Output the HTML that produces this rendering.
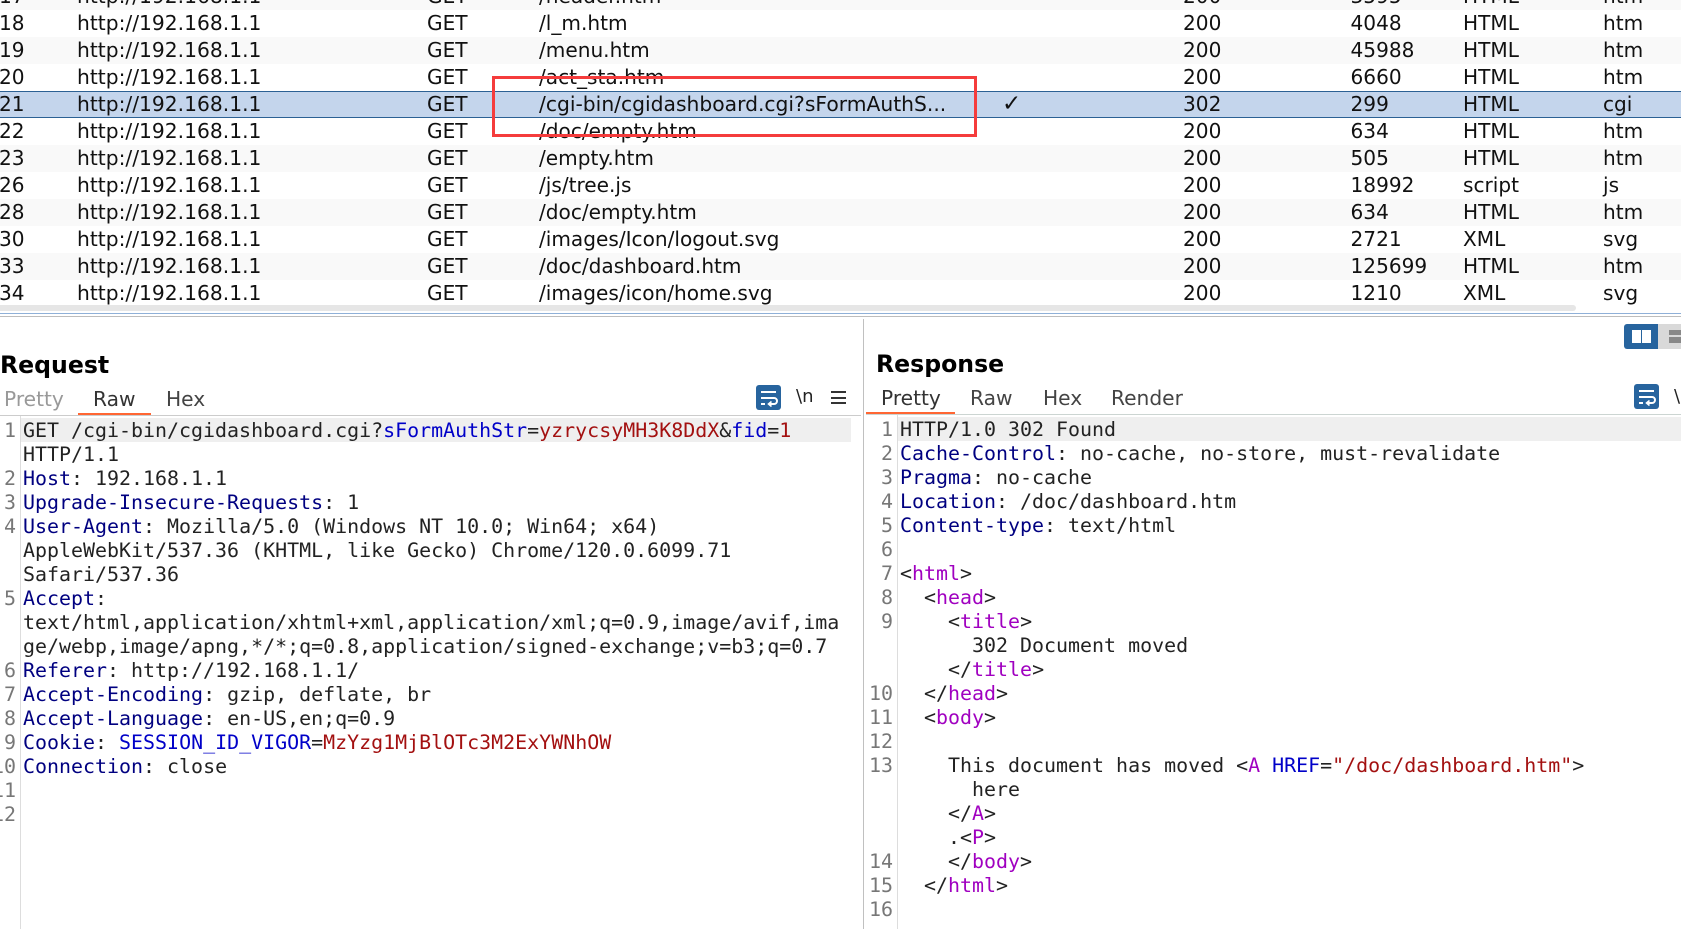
<!DOCTYPE html>
<html lang="en">
<head>
<meta charset="utf-8">
<title>Burp Suite Proxy History</title>
<style>
html,body{margin:0;padding:0;background:#fff;}
body{position:relative;width:1681px;height:929px;overflow:hidden;font-family:"DejaVu Sans","Liberation Sans",sans-serif;color:#000;}
.r{position:absolute;left:0;width:1681px;height:27px;line-height:27px;font-size:20.1px;color:#111;white-space:nowrap;}
.g{background:#f9f9f9;}
.s{background:#c4d5ec;border-top:1px solid #2c6194;border-bottom:1px solid #2c6194;line-height:25px;box-sizing:border-box;height:27px;}
.s .d{font-size:20.3px}
.r span{position:absolute;top:0;}
.a{left:-1px}.b{left:77px;font-size:20.25px}.c{left:427px}.d{left:539px}.e{left:1002px;font-size:23px;font-weight:bold}.f{left:1183px}.h{left:1350.5px}.i{left:1463px}.j{left:1603px}
.box{position:absolute;left:492px;top:76px;width:479px;height:55px;border:3px solid #f53c3c;}
.abs{position:absolute;}
.title{position:absolute;font-weight:bold;font-size:23.6px;line-height:28px;color:#000;}
.tab{position:absolute;font-size:20.2px;line-height:24px;color:#444;white-space:nowrap;}
.code{position:absolute;font-family:"DejaVu Sans Mono","Liberation Mono",monospace;font-size:19.95px;line-height:24px;color:#222;white-space:pre;margin:0;}
.ln{position:absolute;font-family:"DejaVu Sans Mono","Liberation Mono",monospace;font-size:19.95px;line-height:24px;color:#777;white-space:pre;text-align:right;margin:0;}
.n{color:#000080}.p{color:#0000c8}.v{color:#a31010}.t{color:#a000c0}
</style>
</head>
<body>
<div class="r g" style="top:-17px"><span class="a">17</span><span class="b">http://192.168.1.1</span><span class="c">GET</span><span class="d">/header.htm</span><span class="f">200</span><span class="h">3595</span><span class="i">HTML</span><span class="j">htm</span></div>
<div class="r" style="top:10px"><span class="a">18</span><span class="b">http://192.168.1.1</span><span class="c">GET</span><span class="d">/l_m.htm</span><span class="f">200</span><span class="h">4048</span><span class="i">HTML</span><span class="j">htm</span></div>
<div class="r g" style="top:37px"><span class="a">19</span><span class="b">http://192.168.1.1</span><span class="c">GET</span><span class="d">/menu.htm</span><span class="f">200</span><span class="h">45988</span><span class="i">HTML</span><span class="j">htm</span></div>
<div class="r" style="top:64px"><span class="a">20</span><span class="b">http://192.168.1.1</span><span class="c">GET</span><span class="d">/act_sta.htm</span><span class="f">200</span><span class="h">6660</span><span class="i">HTML</span><span class="j">htm</span></div>
<div class="r s" style="top:91px"><span class="a">21</span><span class="b">http://192.168.1.1</span><span class="c">GET</span><span class="d">/cgi-bin/cgidashboard.cgi?sFormAuthS...</span><span class="e">✓</span><span class="f">302</span><span class="h">299</span><span class="i">HTML</span><span class="j">cgi</span></div>
<div class="r" style="top:118px"><span class="a">22</span><span class="b">http://192.168.1.1</span><span class="c">GET</span><span class="d">/doc/empty.htm</span><span class="f">200</span><span class="h">634</span><span class="i">HTML</span><span class="j">htm</span></div>
<div class="r g" style="top:145px"><span class="a">23</span><span class="b">http://192.168.1.1</span><span class="c">GET</span><span class="d">/empty.htm</span><span class="f">200</span><span class="h">505</span><span class="i">HTML</span><span class="j">htm</span></div>
<div class="r" style="top:172px"><span class="a">26</span><span class="b">http://192.168.1.1</span><span class="c">GET</span><span class="d">/js/tree.js</span><span class="f">200</span><span class="h">18992</span><span class="i">script</span><span class="j">js</span></div>
<div class="r g" style="top:199px"><span class="a">28</span><span class="b">http://192.168.1.1</span><span class="c">GET</span><span class="d">/doc/empty.htm</span><span class="f">200</span><span class="h">634</span><span class="i">HTML</span><span class="j">htm</span></div>
<div class="r" style="top:226px"><span class="a">30</span><span class="b">http://192.168.1.1</span><span class="c">GET</span><span class="d">/images/Icon/logout.svg</span><span class="f">200</span><span class="h">2721</span><span class="i">XML</span><span class="j">svg</span></div>
<div class="r g" style="top:253px"><span class="a">33</span><span class="b">http://192.168.1.1</span><span class="c">GET</span><span class="d">/doc/dashboard.htm</span><span class="f">200</span><span class="h">125699</span><span class="i">HTML</span><span class="j">htm</span></div>
<div class="r" style="top:280px"><span class="a">34</span><span class="b">http://192.168.1.1</span><span class="c">GET</span><span class="d">/images/icon/home.svg</span><span class="f">200</span><span class="h">1210</span><span class="i">XML</span><span class="j">svg</span></div>

<div class="box"></div>

<div class="abs" style="left:0;top:305px;width:1576px;height:6px;background:#e6e6e6;border-radius:0 3px 3px 0;"></div>
<div class="abs" style="left:0;top:313px;width:1681px;height:1px;background:#8fb0d8;"></div>
<div class="abs" style="left:0;top:316px;width:1681px;height:1px;background:#bdbdbd;"></div>
<div class="abs" style="left:863px;top:319px;width:1px;height:610px;background:#c0c0c0;"></div>

<!-- Layout toggles -->
<div class="abs" style="left:1624px;top:324px;width:34px;height:25px;background:#27649e;border-radius:3px 0 0 3px;"></div>
<div class="abs" style="left:1632px;top:330px;width:9px;height:13px;background:#fff;"></div>
<div class="abs" style="left:1642px;top:330px;width:9px;height:13px;background:#fff;"></div>
<div class="abs" style="left:1658px;top:324px;width:23px;height:25px;background:#d9d9d9;"></div>
<div class="abs" style="left:1669px;top:330px;width:12px;height:5px;background:#888;"></div>
<div class="abs" style="left:1669px;top:337px;width:12px;height:6px;background:#888;"></div>

<!-- Request -->
<div class="title" style="left:0;top:351px;">Request</div>
<div class="tab" style="left:4px;top:387px;color:#999;">Pretty</div>
<div class="tab" style="left:93px;top:387px;color:#333;">Raw</div>
<div class="tab" style="left:166px;top:387px;">Hex</div>
<div class="abs" style="left:0;top:415px;width:861px;height:1px;background:#ccc;"></div>
<div class="abs" style="left:78px;top:413px;width:73px;height:2px;background:#ff6633;"></div>

<svg class="abs" style="left:756px;top:385px" width="25" height="25" viewBox="0 0 25 25">
<rect width="25" height="25" rx="3" fill="#27649e"/>
<path d="M5 7H20M5 13H18a3 3 0 0 1 0 6H13M5 19H9" fill="none" stroke="#fff" stroke-width="2"/>
<path d="M15.5 16.5L12.5 19l3 2.5" fill="none" stroke="#fff" stroke-width="1.6"/>
</svg>
<div class="tab" style="left:796px;top:385px;color:#222;font-size:18px;">\n</div>
<div class="abs" style="left:831px;top:391px;width:15px;height:2px;background:#333;"></div>
<div class="abs" style="left:831px;top:397px;width:15px;height:2px;background:#333;"></div>
<div class="abs" style="left:831px;top:402px;width:15px;height:2px;background:#333;"></div>

<div class="abs" style="left:20px;top:416px;width:1px;height:513px;background:#ddd;"></div>
<div class="abs" style="left:21px;top:418px;width:830px;height:24px;background:#efefef;"></div>

<pre class="ln" style="right:1665px;top:418px;">1

2
3
4


5


6
7
8
9
10
11
12</pre>

<pre class="code" style="left:23px;top:418px;">GET /cgi-bin/cgidashboard.cgi?<span class="p">sFormAuthStr</span>=<span class="v">yzrycsyMH3K8DdX</span>&amp;<span class="p">fid</span>=<span class="v">1</span>
HTTP/1.1
<span class="n">Host</span>: 192.168.1.1
<span class="n">Upgrade-Insecure-Requests</span>: 1
<span class="n">User-Agent</span>: Mozilla/5.0 (Windows NT 10.0; Win64; x64)
AppleWebKit/537.36 (KHTML, like Gecko) Chrome/120.0.6099.71
Safari/537.36
<span class="n">Accept</span>:
text/html,application/xhtml+xml,application/xml;q=0.9,image/avif,ima
ge/webp,image/apng,*/*;q=0.8,application/signed-exchange;v=b3;q=0.7
<span class="n">Referer</span>: http://192.168.1.1/
<span class="n">Accept-Encoding</span>: gzip, deflate, br
<span class="n">Accept-Language</span>: en-US,en;q=0.9
<span class="n">Cookie</span>: <span class="p">SESSION_ID_VIGOR</span>=<span class="v">MzYzg1MjBlOTc3M2ExYWNhOW</span>
<span class="n">Connection</span>: close</pre>

<!-- Response -->
<div class="title" style="left:876px;top:350px;">Response</div>
<div class="tab" style="left:881px;top:386px;color:#333;">Pretty</div>
<div class="tab" style="left:970px;top:386px;">Raw</div>
<div class="tab" style="left:1043px;top:386px;">Hex</div>
<div class="tab" style="left:1111px;top:386px;">Render</div>
<div class="abs" style="left:866px;top:414px;width:815px;height:1px;background:#ccd5d2;"></div>
<div class="abs" style="left:866px;top:412px;width:89px;height:2px;background:#ff6633;"></div>

<svg class="abs" style="left:1634px;top:384px" width="25" height="25" viewBox="0 0 25 25">
<rect width="25" height="25" rx="3" fill="#27649e"/>
<path d="M5 7H20M5 13H18a3 3 0 0 1 0 6H13M5 19H9" fill="none" stroke="#fff" stroke-width="2"/>
<path d="M15.5 16.5L12.5 19l3 2.5" fill="none" stroke="#fff" stroke-width="1.6"/>
</svg>
<div class="tab" style="left:1674px;top:385px;color:#222;font-size:18px;">\n</div>

<div class="abs" style="left:897px;top:415px;width:1px;height:514px;background:#ddd;"></div>
<div class="abs" style="left:898px;top:417px;width:783px;height:24px;background:#efefef;"></div>

<pre class="ln" style="right:788px;top:417px;">1
2
3
4
5
6
7
8
9


10
11
12
13



14
15
16</pre>

<pre class="code" style="left:900px;top:417px;">HTTP/1.0 302 Found
<span class="n">Cache-Control</span>: no-cache, no-store, must-revalidate
<span class="n">Pragma</span>: no-cache
<span class="n">Location</span>: /doc/dashboard.htm
<span class="n">Content-type</span>: text/html

&lt;<span class="t">html</span>&gt;
  &lt;<span class="t">head</span>&gt;
    &lt;<span class="t">title</span>&gt;
      302 Document moved
    &lt;/<span class="t">title</span>&gt;
  &lt;/<span class="t">head</span>&gt;
  &lt;<span class="t">body</span>&gt;

    This document has moved &lt;<span class="t">A</span> <span class="p">HREF</span>=<span class="v">"/doc/dashboard.htm"</span>&gt;
      here
    &lt;/<span class="t">A</span>&gt;
    .&lt;<span class="t">P</span>&gt;
    &lt;/<span class="t">body</span>&gt;
  &lt;/<span class="t">html</span>&gt;</pre>
</body>
</html>
